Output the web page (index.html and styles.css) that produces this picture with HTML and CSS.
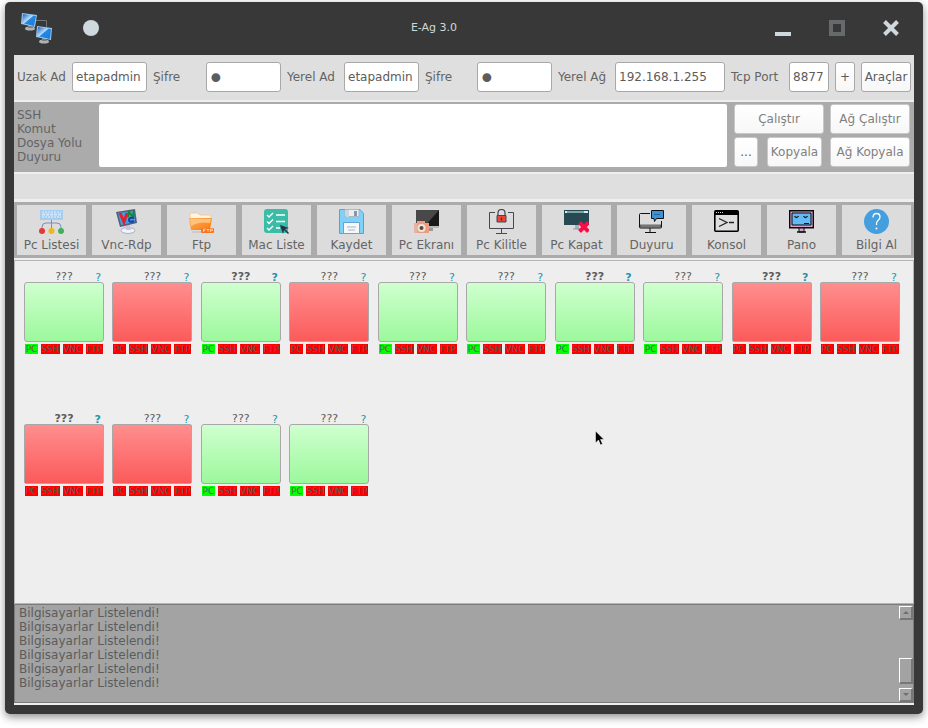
FILE: index.html
```html
<!DOCTYPE html>
<html lang="tr">
<head>
<meta charset="utf-8">
<title>E-Ag 3.0</title>
<link rel="stylesheet" href="styles.css">
</head>
<body>
<div class="window">
  <header class="titlebar">
    <div class="title-side">
      <svg class="app-icon" viewBox="0 0 32 32" aria-hidden="true">
        <defs><linearGradient id="scr" x1="0" y1="0" x2="1" y2="1"><stop offset="0" stop-color="#0a5cc0"/><stop offset=".45" stop-color="#b9dcfa"/><stop offset=".5" stop-color="#2389e2"/><stop offset="1" stop-color="#1a7ad8"/></linearGradient></defs>
        <path d="M15 8.500H25.500V15" fill="none" stroke="#707678"/>
        <ellipse cx="9" cy="16.500" rx="5" ry="2" fill="#aeb2b4"/><path d="M7 12h4l1 4H7z" fill="#7b7f82"/>
        <path d="M1 1l15 2-2 12-14-3z" fill="#9cc9ec"/><path d="M2 2l13 2-2 10-12-3z" fill="url(#scr)"/>
        <ellipse cx="23" cy="29.500" rx="5" ry="2" fill="#aeb2b4"/><path d="M21 26h4l1 3h-5z" fill="#7b7f82"/>
        <path d="M16 14l15 2-1 12-15-3z" fill="#9cc9ec"/><path d="M17 15l13 2-1 10-13-3z" fill="url(#scr)"/>
      </svg>
      <span class="dot"></span>
    </div>
    <h1 class="title">E-Ag 3.0</h1>
    <div class="title-side controls">
      <button class="ctl" aria-label="Minimize"><svg viewBox="0 0 16 16"><path d="M0 12h16v4H0z" fill="#cfd8dc"/></svg></button>
      <button class="ctl" aria-label="Maximize"><svg viewBox="0 0 16 16"><path d="M2 2h12v12H2z" fill="none" stroke="#666a6b" stroke-width="4"/></svg></button>
      <button class="ctl" aria-label="Close"><svg viewBox="0 0 16 16"><path d="M1.500 1.500l13 13M14.500 1.500l-13 13" stroke="#cfd8dc" stroke-width="4"/></svg></button>
    </div>
  </header>
  <div class="content">
    <form class="connection">
      <label for="ru">Uzak Ad</label><input id="ru" value="etapadmin">
      <label for="rp">Şifre</label><input id="rp" type="password" value="1">
      <label for="lu">Yerel Ad</label><input id="lu" value="etapadmin">
      <label for="lp">Şifre</label><input id="lp" type="password" value="1">
      <label for="net">Yerel Ağ</label><input id="net" value="192.168.1.255">
      <label for="port">Tcp Port</label><input id="port" value="8877">
      <button type="button">+</button><button type="button">Araçlar</button>
    </form>
    <section class="command">
      <label for="cmd">SSH<br>Komut<br>Dosya Yolu<br>Duyuru</label>
      <textarea id="cmd"></textarea>
      <div class="actions">
        <button>Çalıştır</button><button>Ağ Çalıştır</button>
        <div class="pair"><button class="dots">...</button><button>Kopyala</button></div><button>Ağ Kopyala</button>
      </div>
    </section>
    <div class="strip"></div>
    <nav class="tools">
      <button><svg viewBox="0 0 25 25"><path d="M1 1h23v10H1z" fill="#a5cdf0"/><path d="M3 3h19M3 8h19" stroke="#e3f2fd" stroke-dasharray="2 1"/><path d="M3 5.500h19" stroke="#d2e8fb" stroke-width="2" stroke-dasharray="3 1"/><path d="M12.500 11v9M3 20v-2q0-4 4-4h11q4 0 4 4v2" fill="none" stroke="#7b8cc4"/><circle cx="3" cy="22" r="3" fill="#e53935"/><circle cx="12.500" cy="22" r="3" fill="#f0b81d"/><circle cx="22" cy="22" r="3" fill="#41b05a"/></svg>Pc Listesi</button>
      <button><svg viewBox="0 0 25 25"><ellipse cx="14" cy="21.500" rx="7" ry="3" fill="#f1f2fa" stroke="#a8abc4"/><path d="M11 15h5l1 6h-5z" fill="#c4c7dc"/><path d="M2 3l19-3 2 14-17 4z" fill="#565d78"/><path d="M4 4l16-2 1 11-14 3z" fill="#38a5e5"/><path d="M6 4l4 9 3-9" fill="none" stroke="#e02030" stroke-width="3"/><path d="M14 8l1-5 4 5 1-6" fill="none" stroke="#19852c" stroke-width="2"/><path d="M20 9q-5-1-5 2t5 1" fill="none" stroke="#233a9a" stroke-width="2"/></svg>Vnc-Rdp</button>
      <button><svg viewBox="0 0 25 25"><defs><linearGradient id="fold" x1="0" y1="0" x2="1" y2="1"><stop offset="0" stop-color="#ffb35c"/><stop offset="1" stop-color="#f47a12"/></linearGradient></defs><path d="M1 4h8l2 2h11v10H1z" fill="#fff4e3" stroke="#f3c998"/><path d="M0 9h23l-2 12H2z" fill="url(#fold)"/><path d="M1 10h21l-1 4Q10 12 2 17z" fill="#ffc27d"/><path d="M3 23h9" stroke="#c5b8aa"/><rect x="12" y="19" width="13" height="5" rx="1" fill="#ff7419"/><path d="M14.500 23v-3h2m-2 1.500h1.500M17.500 20.500h3m-1.500 0V23M21.500 23v-3h2v1.500h-2" fill="none" stroke="#ffe6d1" stroke-width=".7"/></svg>Ftp</button>
      <button><svg viewBox="0 0 25 25"><rect width="24" height="24" rx="3" fill="#3bbca6"/><path d="M12 6h9M12 12.500h9M12 19h4M3 6l2 2 4-4M3 12.500l2 2 4-4M3 19l2 2 4-4" fill="none" stroke="#fff" stroke-width="1.300"/><path d="M16 16l9 3-4 1 4 4-1 1-4-4-1 4z" fill="#302c48"/></svg>Mac Liste</button>
      <button><svg viewBox="0 0 25 25"><path d="M.500 1q0-.500.500-.500h20l3.500 4v20H.500z" fill="#7fd1fa" stroke="#5c9fd0"/><path d="M6 .500h14v7H6z" fill="#eceff2" stroke="#a5bac9"/><path d="M15 2h3v5h-3z" fill="#8797a4"/><path d="M7 1h3v7H7z" fill="#cfd5da"/><path d="M4.500 13.500h16v11h-16z" fill="#f5f7fa" stroke="#6aa3d0"/><path d="M8 18h9M9 21h7" stroke="#a6b4bf"/></svg>Kaydet</button>
      <button><svg viewBox="0 0 25 25"><path d="M2 1h23v16H2z" fill="#484848"/><path d="M25 1v16H11z" fill="#191919"/><path d="M2 17h23v2H2z" fill="#b8b8b8"/><path d="M14 19h5v3h-5z" fill="#999"/><path d="M0 14h3v-2h8v2h4v10H0z" fill="#ee9b86"/><path d="M0 14h3v10H0z" fill="#e4b4a8"/><circle cx="7.500" cy="19" r="4" fill="#eee6d2"/><circle cx="7.500" cy="19" r="2" fill="#584747"/></svg>Pc Ekranı</button>
      <button><svg viewBox="0 0 25 25"><path d="M6 3.500H.500v16h24v-16H19M12.500 19v5M7 24.500h11" fill="none" stroke="#464855"/><path d="M9 7V4q0-3.500 3.500-3.500T16 4v3" fill="none" stroke="#454550" stroke-width="1.200"/><path d="M8 6.500h9v6.500H8z" fill="#ed4536" stroke="#454550"/><path d="M12.500 8.500v3" stroke="#573033" stroke-width="1.500"/></svg>Pc Kilitle</button>
      <button><svg viewBox="0 0 25 25"><path d="M0 1h25v15H0z" fill="#254a54"/><path d="M1 2h23v2H1z" fill="#d7ecec"/><path d="M3 3h17" stroke="#255c66"/><path d="M11 16h4v4h-4z" fill="#9bb5bb"/><path d="M9 20h8" stroke="#8b9da4"/><path d="M15.500 13.500l9 9M24.500 13.500l-9 9" stroke="#f90d46" stroke-width="4"/></svg>Pc Kapat</button>
      <button><svg viewBox="0 0 25 25"><path d="M11 4.500H1.500q-1 0-1 1V18q0 1 1 1h20q1 0 1-1v-6M11 19v4M6 23.500h11" fill="none" stroke="#111"/><path d="M1 16h21v2H1z" fill="#9b9b9b" stroke="#222" stroke-width=".6"/><path d="M12.500 1.500h12v8h-7l-2 3-.5-3h-2.500z" fill="#3b93d7" stroke="#111"/><path d="M15.500 5.500h6" stroke="#173b56" stroke-dasharray="1 1"/></svg>Duyuru</button>
      <button><svg viewBox="0 0 25 25"><rect x=".8" y="1.800" width="23.400" height="20.400" rx="1" fill="#dedede" stroke="#000" stroke-width="1.600"/><path d="M1 2h23v4H1z"/><path d="M2 3.500h7" stroke="#ddd" stroke-dasharray="1 1"/><path d="M5 9.500l8 4-8 4M15 13.500h5" fill="none" stroke="#222" stroke-width="1.300"/></svg>Konsol</button>
      <button><svg viewBox="0 0 25 25"><path d="M.7 1.700h23.600v17H.700z" fill="#d8a2cf" stroke="#080808" stroke-width="1.400"/><path d="M3 4h19v12H3z" fill="#64baf4" stroke="#080808"/><path d="M5.500 7q2 3 4 0M14.500 7q2 3 4 0" fill="none" stroke="#111" stroke-width="1.300"/><path d="M15 14.500h5" stroke="#111"/><path d="M10 19h5v4h-5z" fill="#d4a4cc" stroke="#111"/><path d="M8 23h9" stroke="#111" stroke-width="1.500"/></svg>Pano</button>
      <button><svg viewBox="0 0 25 25"><circle cx="12.500" cy="12.500" r="12.500" fill="#459fdf"/><path d="M9 8.500Q9 4.500 12.500 4.500T16 8q0 2-2 3.500t-1.500 4.500" fill="none" stroke="#fff" stroke-width="1.300"/><circle cx="12.500" cy="19.500" r="1" fill="#fff"/></svg>Bilgi Al</button>
    </nav>
    <main class="board">
      <ul class="pcs">
        <li class="pc on"><div class="name">???<a href="#">?</a></div><div class="screen"></div><div class="tags"><span>PC</span><span>SSH</span><span>VNC</span><span>FTP</span></div></li>
        <li class="pc"><div class="name">???<a href="#">?</a></div><div class="screen"></div><div class="tags"><span>PC</span><span>SSH</span><span>VNC</span><span>FTP</span></div></li>
        <li class="pc on strong"><div class="name">???<a href="#">?</a></div><div class="screen"></div><div class="tags"><span>PC</span><span>SSH</span><span>VNC</span><span>FTP</span></div></li>
        <li class="pc"><div class="name">???<a href="#">?</a></div><div class="screen"></div><div class="tags"><span>PC</span><span>SSH</span><span>VNC</span><span>FTP</span></div></li>
        <li class="pc on"><div class="name">???<a href="#">?</a></div><div class="screen"></div><div class="tags"><span>PC</span><span>SSH</span><span>VNC</span><span>FTP</span></div></li>
        <li class="pc on"><div class="name">???<a href="#">?</a></div><div class="screen"></div><div class="tags"><span>PC</span><span>SSH</span><span>VNC</span><span>FTP</span></div></li>
        <li class="pc on strong"><div class="name">???<a href="#">?</a></div><div class="screen"></div><div class="tags"><span>PC</span><span>SSH</span><span>VNC</span><span>FTP</span></div></li>
        <li class="pc on"><div class="name">???<a href="#">?</a></div><div class="screen"></div><div class="tags"><span>PC</span><span>SSH</span><span>VNC</span><span>FTP</span></div></li>
        <li class="pc strong"><div class="name">???<a href="#">?</a></div><div class="screen"></div><div class="tags"><span>PC</span><span>SSH</span><span>VNC</span><span>FTP</span></div></li>
        <li class="pc"><div class="name">???<a href="#">?</a></div><div class="screen"></div><div class="tags"><span>PC</span><span>SSH</span><span>VNC</span><span>FTP</span></div></li>
        <li class="pc strong"><div class="name">???<a href="#">?</a></div><div class="screen"></div><div class="tags"><span>PC</span><span>SSH</span><span>VNC</span><span>FTP</span></div></li>
        <li class="pc"><div class="name">???<a href="#">?</a></div><div class="screen"></div><div class="tags"><span>PC</span><span>SSH</span><span>VNC</span><span>FTP</span></div></li>
        <li class="pc on"><div class="name">???<a href="#">?</a></div><div class="screen"></div><div class="tags"><span>PC</span><span>SSH</span><span>VNC</span><span>FTP</span></div></li>
        <li class="pc on"><div class="name">???<a href="#">?</a></div><div class="screen"></div><div class="tags"><span>PC</span><span>SSH</span><span>VNC</span><span>FTP</span></div></li>
      </ul>
      <svg class="pointer" viewBox="0 0 10 16" aria-hidden="true"><path d="M.5 1v12l3-3 2 5 2-1-2-4.500H9z" fill="#000" stroke="#fff" stroke-width=".5"/></svg>
    </main>
    <section class="log">
      <div class="lines">Bilgisayarlar Listelendi!<br>Bilgisayarlar Listelendi!<br>Bilgisayarlar Listelendi!<br>Bilgisayarlar Listelendi!<br>Bilgisayarlar Listelendi!<br>Bilgisayarlar Listelendi!</div>
      <div class="scroll">
        <button class="bevel" aria-label="Yukarı"><svg viewBox="0 0 6 3"><path d="M0 3l3-3 3 3z" fill="#6f6f6f"/></svg></button>
        <div class="track"><div class="bevel thumb"></div></div>
        <button class="bevel" aria-label="Aşağı"><svg viewBox="0 0 6 3"><path d="M0 0l3 3 3-3z" fill="#6f6f6f"/></svg></button>
      </div>
    </section>
  </div>
</div>
</body>
</html>
```
FILE: styles.css
```css
* { box-sizing: border-box; }
body {
  margin: 0;
  padding: 2px 5px 14px;
  height: 100vh;
  background: #fff;
  color: #5c5c5c;
  font: 12px/14px "DejaVu Sans", sans-serif;
}
button, input, textarea { font: inherit; color: inherit; margin: 0; padding: 0; }
svg { display: block; }

.window {
  display: flex;
  flex-direction: column;
  height: 100%;
  padding: 0 9px 9px;
  background: #383838;
  border-radius: 5px;
  box-shadow: 0 3px 8px rgba(0, 0, 0, .45);
}
.titlebar { display: flex; align-items: center; height: 53px; flex: none; padding-bottom: 2px; }
.title-side { display: flex; flex: 15 1 0; align-items: center; gap: 30px; padding-left: 7px; }
.app-icon { width: 32px; height: 32px; }
.dot { width: 16px; height: 16px; border-radius: 50%; background: #cfd8dc; }
.title { margin: 0; font-size: 11px; font-weight: 400; color: #cfd8dc; }
.controls { flex-grow: 17; justify-content: flex-end; gap: 38px; padding: 0 15px 0 0; }
.ctl { width: 16px; height: 16px; border: 0; background: none; }

.content { flex: 1; min-height: 0; display: flex; flex-direction: column; background: #eee; padding-bottom: 2px; }

.connection {
  display: grid;
  grid-template-columns:
    minmax(0, 49fr) minmax(0, 75fr) minmax(0, 47fr) minmax(0, 75fr) minmax(0, 51fr) minmax(0, 75fr)
    minmax(0, 46fr) minmax(0, 75fr) minmax(0, 51fr) minmax(0, 110fr) minmax(0, 52fr) minmax(0, 40fr)
    minmax(0, 20fr) minmax(0, 50fr);
  column-gap: 6px;
  align-items: center;
  height: 45px;
  padding: 0 3px 2px;
  background: #dfdfdf;
  white-space: nowrap;
}
.connection label, .command label { color: #646464; }
.connection input, .connection button {
  width: 100%;
  height: 30px;
  border: 1px solid #a8a8a8;
  border-radius: 3px;
  background: #fff;
}
.connection input { padding: 0 2px 0 3px; }
.connection input[type="password"] { padding: 4px 0 0; font-size: 30px; line-height: 24px; }
.connection button { background: linear-gradient(#fff, #f7f7f7); }

.command {
  display: flex;
  height: 70px;
  margin-top: 2px;
  padding: 2px 4px 4px 3px;
  background: #ababab;
}
.command label { width: 82px; padding-top: 4px; }
.command textarea { flex: 1; height: 63px; border: 0; border-radius: 2px; background: #fff; resize: none; }
.actions {
  display: grid;
  grid-template-columns: 90px 80px;
  grid-auto-rows: 30px;
  gap: 3px 6px;
  margin-left: 7px;
}
.actions button {
  border: 1px solid #c8c8c8;
  border-radius: 3px;
  background: linear-gradient(#fff, #f7f7f7);
  color: #808080;
}
.pair { display: flex; justify-content: space-between; padding-right: 2px; }
.pair button { width: 55px; }
.pair .dots { width: 24px; color: #5c5c5c; }

.strip { height: 25px; margin-top: 2px; background: #dfdfdf; }

.tools {
  display: grid;
  grid-template-columns: repeat(12, minmax(0, 1fr));
  gap: 6px;
  height: 56px;
  margin-top: 3px;
  padding: 3px;
  background: #ababab;
}
.tools button {
  display: flex;
  flex-direction: column;
  align-items: center;
  gap: 4px;
  padding-top: 4px;
  border: 0;
  background: #dcdcdc;
  color: #646464;
  white-space: nowrap;
}
.tools svg { width: 25px; height: 25px; }

.board {
  position: relative;
  flex: 1;
  min-height: 0;
  margin-top: 2px;
  padding: 9px 13px 0 9px;
  border: 1px solid #b4b4b4;
}
.pcs {
  display: grid;
  grid-template-columns: repeat(10, 80px);
  justify-content: space-between;
  row-gap: 58px;
  margin: 0;
  padding: 0;
  list-style: none;
}
.name { position: relative; height: 12px; font-size: 11px; line-height: 14px; text-align: center; }
.name a { position: absolute; top: 1px; right: 3px; color: #2196ad; text-decoration: none; }
.strong .name { font-weight: 700; }
.screen {
  height: 60px;
  border: 1px solid #a8a8a8;
  border-radius: 2px;
  background: linear-gradient(#ff8e8e, #fc5a5a);
}
.on .screen { background: linear-gradient(#cfffcf, #9cf89c); border-radius: 3px; }
.tags {
  display: grid;
  grid-template-columns: 13fr 19fr 20fr 17fr;
  gap: 3px;
  padding: 2px 1px 0;
  font-size: 9px;
  line-height: 10px;
  text-align: center;
}
.tags span { min-width: 0; height: 10px; background: #f00; }
.on .tags span:first-child { background: #0f0; }
.pointer { position: absolute; left: 580px; top: 169px; width: 10px; height: 16px; }

.log {
  display: flex;
  height: 99px;
  border: 1px solid #7c7c7c;
  background: #a3a3a3;
}
.lines { flex: 1; padding: 1px 4px; }
.scroll { display: flex; flex-direction: column; width: 14px; padding: 1px 0 0; }
.bevel {
  display: flex;
  align-items: center;
  justify-content: center;
  width: 14px;
  height: 14px;
  flex: none;
  border: 1px solid #fff;
  border-right: 2px solid #777;
  border-bottom: 2px solid #777;
  background: #a3a3a3;
}
.bevel svg { width: 6px; height: 3px; }
.track { display: flex; flex: 1; align-items: flex-end; padding-bottom: 4px; }
.thumb { height: 26px; }
```
